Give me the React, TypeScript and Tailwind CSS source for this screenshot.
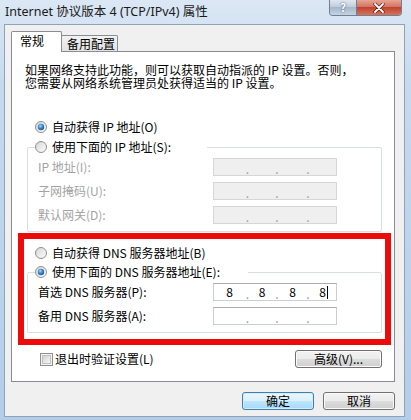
import React from "react";

function Radio({ checked }: { checked?: boolean }) {
  return (
    <svg width="12" height="12" viewBox="0 0 12 12" className="shrink-0">
      <defs>
        <linearGradient id="radioBg" x1="0" y1="0" x2="1" y2="1">
          <stop offset="0" stopColor="#d4d4d4" />
          <stop offset="1" stopColor="#ffffff" />
        </linearGradient>
        <radialGradient id="radioDot" cx="0.4" cy="0.35" r="0.75">
          <stop offset="0" stopColor="#a8dcff" />
          <stop offset="0.45" stopColor="#3c8ad0" />
          <stop offset="1" stopColor="#1a4c88" />
        </radialGradient>
      </defs>
      <circle cx="6" cy="6" r="5.5" fill="url(#radioBg)" stroke="#8f9090" />
      {checked && <circle cx="6" cy="6" r="3.2" fill="url(#radioDot)" />}
    </svg>
  );
}

function Checkbox() {
  return (
    <svg width="13" height="13" viewBox="0 0 13 13" className="shrink-0">
      <defs>
        <linearGradient id="chkBg" x1="0" y1="0" x2="1" y2="1">
          <stop offset="0" stopColor="#cfcfcf" />
          <stop offset="1" stopColor="#fafafa" />
        </linearGradient>
      </defs>
      <rect x="0.5" y="0.5" width="12" height="12" fill="#f4f4f4" stroke="#8f8f8f" />
      <rect x="2.5" y="2.5" width="8" height="8" fill="url(#chkBg)" stroke="#c0c0c0" />
    </svg>
  );
}

function IpBox({ values, disabled, caret }: { values?: string[]; disabled?: boolean; caret?: boolean }) {
  const v = values ?? ["", "", "", ""];
  const dot = disabled ? "text-[#a0a0a0]" : "text-[#9a9a9a]";
  return (
    <div
      className={`w-[124px] h-[18px] border flex items-center text-[12px] leading-[12px] ${
        disabled ? "bg-[#efefef] border-[#d6d6d6]" : "bg-white border-[#c9ced6] border-t-[#abadb3]"
      }`}
    >
      <span className="w-[31px] text-center">{v[0]}</span>
      <span className={`w-[5px] text-center pt-[4px] ${dot}`}>.</span>
      <span className="w-[24px] text-center">{v[1]}</span>
      <span className={`w-[6px] text-center pt-[4px] ${dot}`}>.</span>
      <span className="w-[25px] text-center">{v[2]}</span>
      <span className={`w-[6px] text-center pt-[4px] ${dot}`}>.</span>
      <span className="w-[25px] flex justify-center items-center">
        {v[3]}
        {caret && <span className="w-px h-[13px] bg-black ml-[1px]" />}
      </span>
    </div>
  );
}

function Row({ label, disabled, values, caret }: { label: string; disabled?: boolean; values?: string[]; caret?: boolean }) {
  return (
    <div className="h-[18px] flex items-center">
      <span className={`w-[175px] ml-[3px] ${disabled ? "text-[#a3a3a3]" : "text-black"}`}>{label}</span>
      <IpBox values={values} disabled={disabled} caret={caret} />
    </div>
  );
}

function Button({ children, primary, w }: { children: React.ReactNode; primary?: boolean; w: string }) {
  return (
    <div
      className={`${w} h-[18px] rounded-[3px] border flex items-center justify-center text-[12px] ${
        primary
          ? "border-[#3c7fb1] bg-[linear-gradient(#eaf6fd,#d9f0fc_50%,#bee6fd_50%,#a7d9f5)] shadow-[inset_0_0_0_1px_#d6ecf8]"
          : "border-[#707070] bg-[linear-gradient(#f2f2f2,#ebebeb_50%,#dddddd_50%,#cfcfcf)] shadow-[inset_0_0_0_1px_#fbfbfb]"
      }`}
    >
      {children}
    </div>
  );
}

export default function App() {
  return (
    <div className="w-[411px] h-[420px] overflow-hidden flex flex-col bg-[linear-gradient(180deg,#dbe7f4,#c6daef_20%,#b4cde8)] font-['Noto_Sans_CJK_SC',sans-serif] text-[12px] text-black">
      {/* title bar */}
      <div className="h-[24px] flex justify-between shrink-0">
        <div className="pl-[5px] pt-[4px] text-[12.5px] leading-[16px] text-[#1a1a1a] font-['Noto_Sans','Noto_Sans_CJK_SC',sans-serif]">
          Internet 协议版本 4 (TCP/IPv4) 属性
        </div>
        <div className="flex mr-[9px] h-[16px] rounded-b-[4px] border border-t-0 border-[#6f7f94] overflow-hidden">
          <div className="w-[27px] flex items-center justify-center bg-[linear-gradient(#dfe7f0,#bccadb_50%,#a7b8cc_50%,#c4d3e4)] border-r border-[#6f7f94] text-[11px] font-bold text-white [text-shadow:0_0_2px_#3a4a60] leading-none">
            ?
          </div>
          <div className="w-[44px] flex items-center justify-center bg-[linear-gradient(#e8a493,#d0705d_50%,#c0432f_50%,#d6735c)]">
            <svg width="12" height="10" viewBox="0 0 12 10">
              <path d="M2 1 L10 9 M10 1 L2 9" stroke="#5a1a10" strokeWidth="3.2" strokeLinecap="round" />
              <path d="M2 1 L10 9 M10 1 L2 9" stroke="#ffffff" strokeWidth="1.8" strokeLinecap="round" />
            </svg>
          </div>
        </div>
      </div>

      {/* client area */}
      <div className="ml-[4px] mr-[6px] mb-[3px] flex-1 border border-[#8fa2b8] bg-[#f0f0f0] flex flex-col pl-[6px] pt-[6px]">
        {/* tabs */}
        <div className="h-[20px] flex items-end">
          <div className="relative z-10 -mb-px w-[51px] h-[21px] bg-white border-l border-t border-r border-[#898c95] rounded-t-[2px] pl-[8px] pt-[1px] leading-[16px]">
            常规
          </div>
          <div className="w-[56px] h-[16px] bg-[linear-gradient(#f2f2f2,#e3e3e3)] border-t border-r border-[#898c95] rounded-tr-[2px] pl-[5px] leading-[15px]">
            备用配置
          </div>
        </div>

        {/* tab panel */}
        <div className="w-[384px] h-[331px] border border-[#898c95] bg-white flex flex-col">
          <p className="ml-[13px] mt-[11px] leading-[13px] whitespace-nowrap">
            如果网络支持此功能，则可以获取自动指派的 IP 设置。否则，
            <br />
            您需要从网络系统管理员处获得适当的 IP 设置。
          </p>

          <div className="ml-[23px] mt-[31px] h-[14px] flex items-center gap-[5px]">
            <Radio checked />
            <span>自动获得 IP 地址(O)</span>
          </div>

          <fieldset className="ml-[15px] mt-[6px] w-[355px] border border-[#d5dfe5] rounded-[2px] pl-[7px] pt-[4px] pb-[7px] flex flex-col gap-[6px]">
            <legend className="w-[172px] h-[14px]">
              <div className="h-[14px] flex items-center gap-[5px]">
                <Radio />
                <span>使用下面的 IP 地址(S):</span>
              </div>
            </legend>
            <Row label="IP 地址(I):" disabled />
            <Row label="子网掩码(U):" disabled />
            <Row label="默认网关(D):" disabled />
          </fieldset>

          {/* highlighted DNS section */}
          <div className="ml-[6px] mt-px w-[373px] h-[112px] border-[6px] border-[#ec0a0a] flex flex-col">
            <div className="ml-[11px] mt-[7px] h-[14px] flex items-center gap-[5px]">
              <Radio />
              <span>自动获得 DNS 服务器地址(B)</span>
            </div>
            <fieldset className="ml-[3px] mt-[5px] w-[355px] border border-[#d5dfe5] rounded-[2px] pl-[7px] pt-[4px] pb-[7px] flex flex-col gap-[6px]">
              <legend className="w-[213px] h-[14px]">
                <div className="h-[14px] flex items-center gap-[5px]">
                  <Radio checked />
                  <span>使用下面的 DNS 服务器地址(E):</span>
                </div>
              </legend>
              <Row label="首选 DNS 服务器(P):" values={["8", "8", "8", "8"]} caret />
              <Row label="备用 DNS 服务器(A):" />
            </fieldset>
          </div>

          <div className="mt-[5px] h-[18px] flex items-center justify-between">
            <div className="ml-[28px] flex items-center gap-[2px]">
              <Checkbox />
              <span>退出时验证设置(L)</span>
            </div>
            <div className="mr-[12px]">
              <Button w="w-[87px]">高级(V)...</Button>
            </div>
          </div>
        </div>

        {/* dialog buttons */}
        <div className="mt-[10px] pr-[9px] flex justify-end gap-[9px]">
          <Button w="w-[72px]" primary>
            确定
          </Button>
          <Button w="w-[72px]">取消</Button>
        </div>
      </div>
    </div>
  );
}
